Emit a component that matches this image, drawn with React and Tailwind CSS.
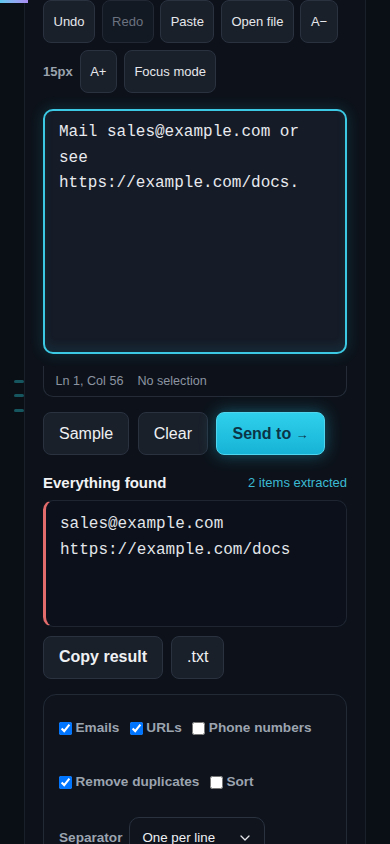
import React from "react";

const sans = { fontFamily: '"Liberation Sans", Arial, sans-serif' };
const mono = { fontFamily: '"Liberation Mono", "DejaVu Sans Mono", monospace' };

function Btn({ children, disabled }) {
  return (
    <button
      className={
        disabled
          ? "shrink-0 h-[43px] px-[9.5px] rounded-[8px] border border-[#222935] bg-[#131922] text-[13px] text-[#6b7280]"
          : "shrink-0 h-[43px] px-[9.5px] rounded-[8px] border border-[#2a3240] bg-[#1a202a] text-[13px] text-[#e5e7eb]"
      }
    >
      {children}
    </button>
  );
}

function BigBtn({ children, bold }) {
  return (
    <button
      className={
        "shrink-0 h-[43px] px-[15px] rounded-[8px] border border-[#2a3240] bg-[#1a202a] text-[16px] text-[#eef0f3] " +
        (bold ? "font-bold" : "")
      }
    >
      {children}
    </button>
  );
}

function Check({ label, checked }) {
  return (
    <label className="inline-flex items-center">
      <input type="checkbox" defaultChecked={checked} className="m-0 mr-[3.5px] w-[13px] h-[13px]" />
      <span className="text-[13.6px] font-bold text-[#9ca4b0]">{label}</span>
    </label>
  );
}

export default function App() {
  return (
    <div className="relative h-[844px] overflow-hidden bg-[#0a0e15]" style={sans}>
      <div className="absolute left-0 top-0 w-[28px] h-[3px] bg-gradient-to-r from-[#5cc8ee] to-[#a88cf3]" />
      <div className="absolute left-[14px] top-[380px] w-[10px] h-[3px] rounded-full bg-[#16565f]" />
      <div className="absolute left-[14px] top-[394px] w-[10px] h-[3px] rounded-full bg-[#16565f]" />
      <div className="absolute left-[14px] top-[409px] w-[10px] h-[3px] rounded-full bg-[#16565f]" />

      <div className="ml-[24px] w-[342px] min-h-[844px] border-x border-[#1a202a] bg-[#0d121a] px-[18px] flex flex-col">
        <div className="shrink-0 flex gap-[6.5px]">
          <Btn>Undo</Btn>
          <Btn disabled>Redo</Btn>
          <Btn>Paste</Btn>
          <Btn>Open file</Btn>
          <Btn>A−</Btn>
        </div>
        <div className="shrink-0 flex items-center gap-[7px] mt-[7px]">
          <span className="text-[13px] font-bold text-[#9aa2ae]">15px</span>
          <Btn>A+</Btn>
          <Btn>Focus mode</Btn>
        </div>

        <div
          className="shrink-0 mt-[16px] h-[245px] rounded-[10px] border-2 border-[#3cc9e3] bg-[#151b27] pl-[14px] pr-[12px] pt-[9px] text-[16px] leading-[25.6px] text-[#e8eaee] whitespace-pre-wrap shadow-[0_0_14px_rgba(34,200,230,0.18),inset_0_-6px_10px_rgba(34,200,230,0.08)]"
          style={mono}
        >
          Mail sales@example.com or see https://example.com/docs.
        </div>

        <div className="shrink-0 mt-[12px] h-[31px] rounded-b-[10px] border border-t-0 border-[#252c38] flex items-center px-[11.5px] gap-[14px] text-[12.6px] text-[#8c94a1]">
          <span>Ln 1, Col 56</span>
          <span>No selection</span>
        </div>

        <div className="shrink-0 flex gap-[8.5px] mt-[15px]">
          <BigBtn>Sample</BigBtn>
          <BigBtn>Clear</BigBtn>
          <button className="shrink-0 h-[43px] px-[15px] rounded-[8px] border border-[#4fd6ee] bg-gradient-to-b from-[#2ed0ec] to-[#16b3d6] text-[16px] font-bold text-[#0b3446] shadow-[0_0_16px_rgba(34,200,235,0.4)]">
            Send to <span className="text-[13px]">→</span>
          </button>
        </div>

        <div className="shrink-0 mt-[18px] h-[20px] flex items-center justify-between">
          <span className="text-[15px] font-bold text-[#f1f3f5]">Everything found</span>
          <span className="text-[13px] text-[#3bbad3]">2 items extracted</span>
        </div>

        <div
          className="shrink-0 mt-[6.5px] h-[127px] rounded-[10px] border border-[#1f2632] border-l-[3px] border-l-[#e26b6b] bg-[#0b101a] pl-[14px] pt-[10px] text-[16px] leading-[26px] text-[#e3e6ea]"
          style={mono}
        >
          <div>sales@example.com</div>
          <div>https://example.com/docs</div>
        </div>

        <div className="shrink-0 flex gap-[8px] mt-[9px]">
          <BigBtn bold>Copy result</BigBtn>
          <BigBtn>.txt</BigBtn>
        </div>

        <div className="shrink-0 mt-[15px] rounded-[13px] border border-[#222a36] bg-[#0e131c] px-[15px] pt-[22px] pb-[20px] flex flex-col">
          <div className="h-[24px] flex items-center gap-[10.5px]">
            <Check label="Emails" checked />
            <Check label="URLs" checked />
            <Check label="Phone numbers" />
          </div>
          <div className="h-[24px] mt-[30px] flex items-center gap-[10.5px]">
            <Check label="Remove duplicates" checked />
            <Check label="Sort" />
          </div>
          <div className="mt-[22px] flex items-center gap-[7px]">
            <span className="text-[13.6px] font-bold text-[#9ca4b0]">Separator</span>
            <div className="w-[136px] h-[43px] rounded-[10px] border border-[#2a3240] bg-[#0f141d] pl-[12px] pr-[14px] flex items-center justify-between text-[13.33px] text-[#eef0f3]">
              <span>One per line</span>
              <svg width="10" height="6" viewBox="0 0 10 6" fill="none">
                <path d="M1 1l4 4 4-4" stroke="#e5e7eb" strokeWidth="1.3" strokeLinecap="round" strokeLinejoin="round" />
              </svg>
            </div>
          </div>
        </div>
      </div>
    </div>
  );
}
